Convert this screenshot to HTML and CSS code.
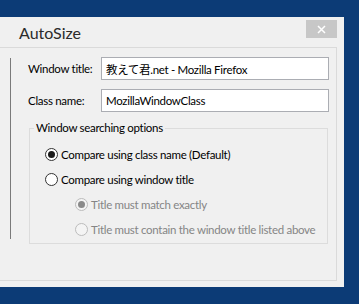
FILE: index.html
```html
<!DOCTYPE html>
<html lang="en">
<head>
  <meta charset="UTF-8">
  <title>AutoSize</title>
  <link rel="stylesheet" href="styles.css">
</head>
<body>
  <div class="window">
    <div class="titlebar">
      <h1>AutoSize</h1>
      <button class="close" type="button">
        <svg width="9" height="9" viewBox="0 0 9 9"><path d="M1 1L8 8M8 1L1 8" stroke="#fff" stroke-width="1.5"/></svg>
      </button>
    </div>

    <div class="panel">
      <div class="side"></div>
      <form class="form">
        <div class="row">
          <label>Window title:</label>
          <input type="text" value="教えて君.net - Mozilla Firefox">
        </div>
        <div class="row">
          <label>Class name:</label>
          <input type="text" value="MozillaWindowClass">
        </div>

        <fieldset>
          <legend>Window searching options</legend>
          <div class="opt"><span class="radio checked"></span>Compare using class name (Default)</div>
          <div class="opt"><span class="radio"></span>Compare using window title</div>
          <div class="opt sub disabled"><span class="radio checked"></span>Title must match exactly</div>
          <div class="opt sub disabled"><span class="radio"></span>Title must contain the window title listed above</div>
        </fieldset>
      </form>
    </div>
  </div>
</body>
</html>
```

FILE: styles.css
```css
body {
  margin: 0;
  background-color: #0c3b76;
  font-family: 'Segoe UI', Lato, 'Noto Sans CJK JP', sans-serif;
  font-size: 11.5px;
  letter-spacing: -0.3px;
  color: #000;
  height: 304px;
  overflow: hidden;
}

.window {
  margin-top: 17px;
  width: 337px;
  height: 263px;
  padding: 0 7px 7px 0;
  background-color: #f0f0f0;
}

.titlebar {
  height: 30px;
  display: flex;
  align-items: flex-start;
  justify-content: space-between;
}

h1 {
  margin: 5px 0 0 19px;
  font-size: 16px;
  font-weight: normal;
  letter-spacing: 0;
  color: #2b2b2b;
  line-height: 22px;
}

.close {
  margin-top: 3px;
  width: 31px;
  height: 18px;
  border: none;
  padding: 0;
  background-color: #c7c7c7;
  display: flex;
  align-items: center;
  justify-content: center;
}

.panel {
  height: 232px;
  border-top: 1px solid #dadada;
  border-right: 1px solid #dadada;
  border-bottom: 1px solid #dadada;
  display: flex;
  align-items: flex-start;
}

.side {
  width: 10px;
  height: 181px;
  margin-top: 10px;
  border-right: 1px solid #7a7a7a;
}

.form {
  margin: 9px 0 0 17px;
  width: 301px;
}

.row {
  display: flex;
  align-items: center;
  height: 23px;
  margin-bottom: 9px;
  white-space: nowrap;
}

.row label {
  width: 73px;
}

.row input {
  width: 228px;
  height: 23px;
  box-sizing: border-box;
  border: 1px solid #abadb3;
  background-color: #fff;
  padding: 0 4px;
  font: inherit;
  letter-spacing: inherit;
  color: #000;
}

fieldset {
  margin: 7px 0 0 1px;
  padding: 6px 0 0 0;
  width: 297px;
  height: 115px;
  border: 1px solid #dcdcdc;
  white-space: nowrap;
}

legend {
  padding: 0 2px;
  margin-left: 4px;
  line-height: 14px;
}

.opt {
  display: flex;
  align-items: center;
  height: 24px;
  margin-top: 1px;
  padding-left: 15px;
}

.opt.sub {
  padding-left: 45px;
}

.disabled {
  color: #858585;
}

.radio {
  width: 11px;
  height: 11px;
  border: 1px solid #333;
  border-radius: 50%;
  background-color: #fff;
  margin-right: 3px;
  display: flex;
  align-items: center;
  justify-content: center;
}

.radio.checked::after {
  content: "";
  width: 7px;
  height: 7px;
  border-radius: 50%;
  background-color: #1a1a1a;
}

.disabled .radio {
  border-color: #bcbcbc;
  background-color: #f4f4f4;
}

.disabled .radio.checked::after {
  background-color: #8a8a8a;
}
```
